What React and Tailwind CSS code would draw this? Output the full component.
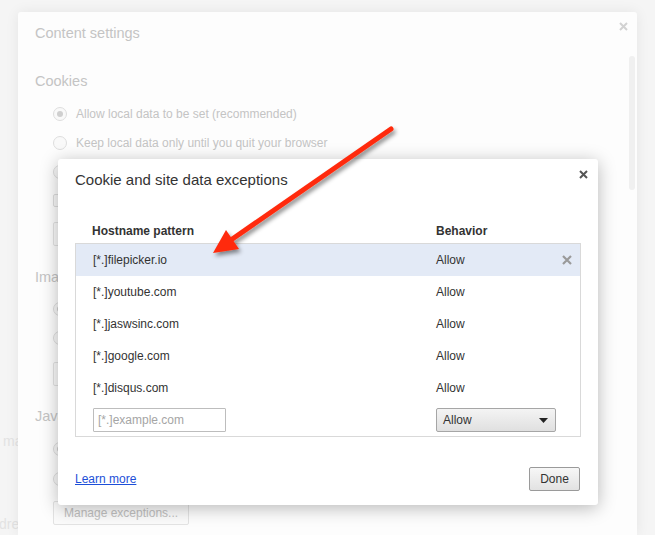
import React from "react";

const fontCls = "font-['Liberation_Sans',Arial,Helvetica,sans-serif]";

function Radio({ checked }) {
  return (
    <span className="w-[14px] h-[14px] rounded-full border border-[#dedede] bg-[#f9f9f9] flex items-center justify-center shrink-0">
      {checked && <span className="w-[6px] h-[6px] rounded-full bg-[#cfcfcf]" />}
    </span>
  );
}

function Check() {
  return <span className="w-[13px] h-[13px] rounded-[2px] border border-[#dedede] bg-[#f9f9f9] shrink-0" />;
}

function Option({ children, checked, box, className = "" }) {
  return (
    <div className={`flex items-center gap-[9px] h-[20px] text-[12px] text-[#c4c4c4] whitespace-nowrap ${className}`}>
      {box ? <Check /> : <Radio checked={checked} />}
      <span>{children}</span>
    </div>
  );
}

function GhostButton({ children }) {
  return (
    <div className="h-[24px] px-[10px] flex items-center border border-[#e3e3e3] rounded-[2px] bg-[#fbfbfb] text-[12px] text-[#c0c0c0] whitespace-nowrap">
      {children}
    </div>
  );
}

const exceptions = [
  "[*.]filepicker.io",
  "[*.]youtube.com",
  "[*.]jaswsinc.com",
  "[*.]google.com",
  "[*.]disqus.com",
];

function ExceptionsDialog() {
  return (
    <div className="absolute left-[58px] top-[159px] w-[540px] h-[346px] bg-white rounded-[3px] shadow-[0_3px_18px_rgba(0,0,0,0.28)] px-[17px] pt-[11px] flex flex-col">
      <button className="absolute right-[9px] top-[9px] text-[#555] w-[12px] h-[12px] flex items-center justify-center">
        <svg width="9" height="9" viewBox="0 0 9 9">
          <path d="M1 1L8 8M8 1L1 8" stroke="#555" strokeWidth="2" />
        </svg>
      </button>
      <div className="h-[20px] leading-[20px] text-[15px] text-[#333]">Cookie and site data exceptions</div>

      <div className="mt-[33px] h-[16px] grid grid-cols-[361px_1fr] text-[12px] font-bold text-[#333] leading-[16px]">
        <div className="pl-[17px]">Hostname pattern</div>
        <div>Behavior</div>
      </div>

      <div className="mt-[4px] border border-[#d9d9d9] flex flex-col">
        {exceptions.map((host, i) => (
          <div
            key={host}
            className={`h-[32px] grid grid-cols-[360px_1fr_auto] items-center text-[12px] text-[#333] ${i === 0 ? "bg-[#e3eaf6]" : ""}`}
          >
            <div className="pl-[17px]">{host}</div>
            <div>Allow</div>
            <div className="pr-[8px] w-[24px] flex justify-end">
              {i === 0 && (
                <svg width="10" height="10" viewBox="0 0 10 10">
                  <path d="M1 1L9 9M9 1L1 9" stroke="#9a9a9a" strokeWidth="2.2" />
                </svg>
              )}
            </div>
          </div>
        ))}
        <div className="h-[32px] grid grid-cols-[360px_1fr] items-center text-[12px]">
          <div className="pl-[17px]">
            <div className="w-[133px] h-[24px] border border-[#bdbdbd] rounded-[1px] px-[4px] flex items-center text-[#a5a5a5]">
              [*.]example.com
            </div>
          </div>
          <div>
            <div className="w-[120px] h-[24px] border border-[#a6a6a6] rounded-[2px] bg-gradient-to-b from-[#f4f4f4] to-[#e0e0e0] pl-[6px] pr-[7px] flex items-center justify-between text-[#333]">
              <span>Allow</span>
              <svg width="9" height="5" viewBox="0 0 9 5">
                <path d="M0 0H9L4.5 5Z" fill="#222" />
              </svg>
            </div>
          </div>
        </div>
      </div>

      <div className="mt-[30px] flex items-center justify-between">
        <a className="text-[12px] text-[#1d4fd8] underline">Learn more</a>
        <button className="h-[24px] w-[51px] mr-[1px] border border-[#9a9a9a] rounded-[2px] bg-gradient-to-b from-[#f7f7f7] to-[#e2e2e2] text-[12px] text-[#333]">
          Done
        </button>
      </div>
    </div>
  );
}

export default function App() {
  return (
    <div className={`relative w-[655px] h-[535px] overflow-hidden bg-[#f5f5f5] flex ${fontCls}`}>
      <div className="w-[18px] shrink-0 overflow-hidden flex flex-col text-[14px] text-[#e3e3e3] whitespace-nowrap">
        <div className="mt-[431px] ml-[3px]">manage</div>
        <div className="mt-[62px] ml-[-1px]">dress</div>
      </div>

      <div className="relative w-[619px] shrink-0 mt-[12px] h-[523px] bg-[#fdfdfd] rounded-t-[3px] shadow-[0_0_14px_rgba(0,0,0,0.07)] flex">
        <button className="absolute right-[9px] top-[9px] w-[10px] h-[10px] flex items-center justify-center">
          <svg width="9" height="9" viewBox="0 0 9 9">
            <path d="M1 1L8 8M8 1L1 8" stroke="#d2d2d2" strokeWidth="2" />
          </svg>
        </button>

        <div className="flex-1 pl-[17px] pt-[11px] flex flex-col">
          <div className="h-[20px] leading-[20px] text-[14.5px] text-[#c4c4c4]">Content settings</div>

          <div className="mt-[28px] h-[20px] leading-[20px] text-[14.5px] text-[#c4c4c4]">Cookies</div>
          <div className="ml-[18px] flex flex-col">
            <Option checked className="mt-[13px]">Allow local data to be set (recommended)</Option>
            <Option className="mt-[9px]">Keep local data only until you quit your browser</Option>
            <Option className="mt-[9px]">Block sites from setting any data</Option>
            <Option box className="mt-[8px]">Block third-party cookies and site data</Option>
            <div className="mt-[12px] flex gap-[8px]">
              <GhostButton>Manage exceptions...</GhostButton>
              <GhostButton>All cookies and site data...</GhostButton>
            </div>
          </div>

          <div className="mt-[21px] h-[20px] leading-[20px] text-[14.5px] text-[#c4c4c4]">Images</div>
          <div className="ml-[18px] flex flex-col">
            <Option checked className="mt-[12px]">Show all images (recommended)</Option>
            <Option className="mt-[9px]">Do not show any images</Option>
            <div className="mt-[14px] flex">
              <GhostButton>Manage exceptions...</GhostButton>
            </div>
          </div>

          <div className="mt-[20px] h-[20px] leading-[20px] text-[14.5px] text-[#c4c4c4]">JavaScript</div>
          <div className="ml-[18px] flex flex-col">
            <Option checked className="mt-[13px]">Allow all sites to run JavaScript (recommended)</Option>
            <Option className="mt-[10px]">Do not allow any site to run JavaScript</Option>
            <div className="mt-[12px] flex">
              <GhostButton>Manage exceptions...</GhostButton>
            </div>
          </div>
        </div>

        <div className="w-[6px] mr-[2px] mt-[44px] h-[134px] rounded-full bg-[#f0f0f0]" />
      </div>

      <div className="flex-1" />

      <ExceptionsDialog />

      <svg className="absolute inset-0 pointer-events-none" width="655" height="535" viewBox="0 0 655 535">
        <defs>
          <filter id="arrowShadow" x="-20%" y="-20%" width="140%" height="140%">
            <feDropShadow dx="2" dy="3" stdDeviation="2" floodColor="#000" floodOpacity="0.45" />
          </filter>
        </defs>
        <g filter="url(#arrowShadow)">
          <line x1="391" y1="129" x2="228" y2="242" stroke="#ff2a0a" strokeWidth="5" strokeLinecap="round" />
          <polygon points="213,253 239,249 226,230" fill="#ff2a0a" />
        </g>
      </svg>
    </div>
  );
}
